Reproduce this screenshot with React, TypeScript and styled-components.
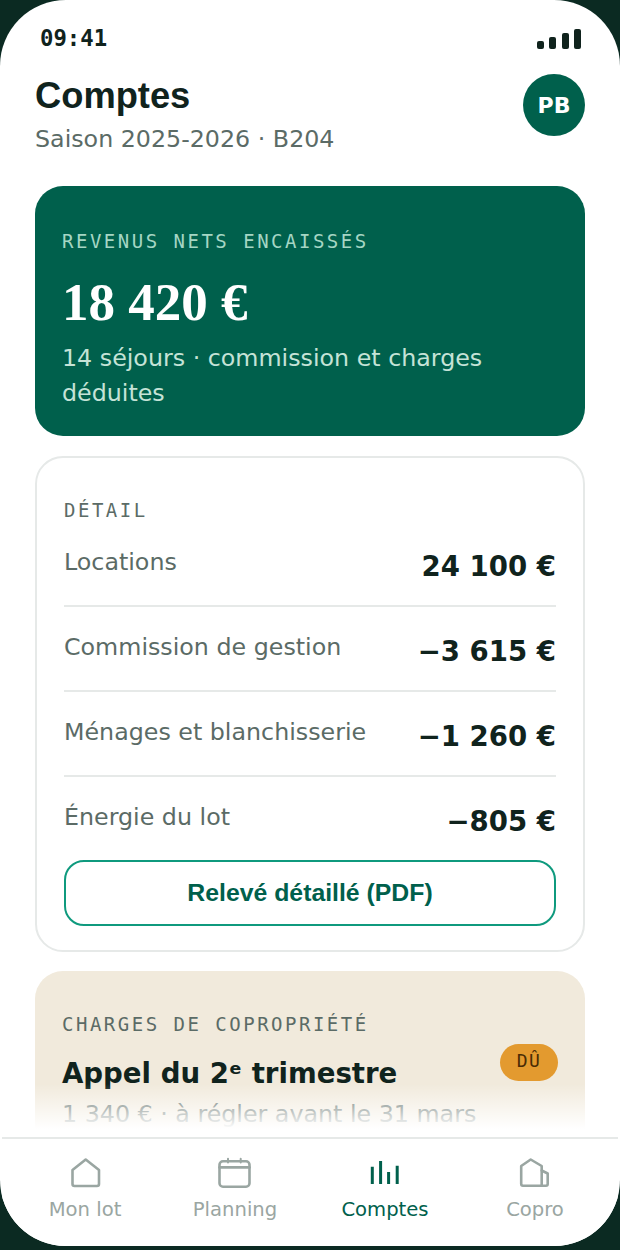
import React from 'react'
import styled, { createGlobalStyle } from 'styled-components'

const GlobalStyle = createGlobalStyle`
  html, body {
    margin: 0;
    padding: 0;
    background: #0b2a22;
  }
  * { box-sizing: border-box; }
`

const Phone = styled.div`
  position: relative;
  width: 620px;
  height: 1246px;
  border-radius: 66px;
  background: #fff;
  overflow: hidden;
  display: flex;
  flex-direction: column;
  font-family: 'DejaVu Sans', sans-serif;
`

const StatusBar = styled.div`
  display: flex;
  justify-content: space-between;
  align-items: flex-end;
  padding: 24px 39px 0 40px;
  height: 52px;
  flex: none;
`

const Clock = styled.span`
  font-family: 'DejaVu Sans Mono', monospace;
  font-weight: 700;
  font-size: 22.3px;
  line-height: 26px;
  margin-bottom: 1px;
  color: #10231d;
`

const Signal = styled.div`
  display: flex;
  align-items: flex-end;
  gap: 5.3px;
  margin-bottom: 3px;
`

const SignalBar = styled.i<{ $h: number }>`
  display: block;
  width: 7px;
  height: ${({ $h }) => $h}px;
  border-radius: 2px;
  background: #10231d;
`

const Header = styled.header`
  display: flex;
  justify-content: space-between;
  align-items: flex-start;
  padding: 23px 35px 0;
  flex: none;
`

const Title = styled.h1`
  margin: 0;
  font-family: 'Liberation Sans', sans-serif;
  font-weight: 700;
  font-size: 36.3px;
  line-height: 42px;
  color: #10231d;
`

const Subtitle = styled.p`
  margin: 7px 0 0;
  font-size: 23.75px;
  line-height: 30px;
  color: #5b6b66;
`

const Avatar = styled.div`
  width: 62px;
  height: 62px;
  border-radius: 50%;
  background: #00604c;
  color: #fff;
  font-weight: 700;
  font-size: 22px;
  display: flex;
  align-items: center;
  justify-content: center;
  margin-top: -1px;
`

const Scroll = styled.main`
  flex: 1;
  display: flex;
  flex-direction: column;
  gap: 19.5px;
  padding: 32px 35px 0;
  overflow: hidden;
`

const Hero = styled.section`
  flex: none;
  height: 250px;
  padding: 43px 27px 0;
  border-radius: 28px;
  background: #00604c;
`

const Eyebrow = styled.div<{ $color: string }>`
  font-family: 'DejaVu Sans Mono', monospace;
  font-size: 19px;
  line-height: 24px;
  letter-spacing: 2.5px;
  color: ${({ $color }) => $color};
`

const HeroAmount = styled.div`
  margin-top: 16px;
  font-family: 'Liberation Serif', serif;
  font-weight: 700;
  font-size: 53px;
  line-height: 66px;
  color: #fff;
`

const HeroNote = styled.p`
  margin: 6px 0 0;
  font-size: 23.75px;
  line-height: 34.5px;
  color: #c5e3d7;
`

const DetailCard = styled.section`
  flex: none;
  height: 496px;
  padding: 40px 27px 0;
  border: 2px solid #e6e9e8;
  border-radius: 28px;
  background: #fff;
`

const Row = styled.div`
  display: flex;
  justify-content: space-between;
  height: 85px;
  padding-top: 23px;
  border-bottom: 2px solid #e6e9e8;
  &:last-child { border-bottom: 0; height: 83px; }
`

const RowLabel = styled.span`
  font-size: 23.75px;
  line-height: 34px;
  color: #5b6b66;
`

const RowValue = styled.span`
  font-weight: 700;
  font-size: 27.6px;
  line-height: 34px;
  margin-top: 5px;
  color: #10231d;
`

const PdfButton = styled.button`
  display: block;
  width: 100%;
  height: 66px;
  border: 2px solid #0f9a7e;
  border-radius: 20px;
  background: #fff;
  font-family: 'Liberation Sans', sans-serif;
  font-weight: 700;
  font-size: 24.8px;
  color: #00604c;
`

const ChargesCard = styled.section`
  position: relative;
  flex: none;
  height: 240px;
  padding: 41px 27px 0;
  border-radius: 28px;
  background: #f1eadc;
`

const ChargesTitle = styled.h2`
  margin: 20px 0 0;
  font-size: 27.6px;
  line-height: 36px;
  font-weight: 700;
  color: #10231d;
`

const ChargesNote = styled.p`
  margin: 5px 0 0;
  font-size: 23.75px;
  line-height: 34px;
  color: #5b6b66;
`

const DueBadge = styled.span`
  position: absolute;
  top: 73px;
  right: 27px;
  width: 58px;
  height: 37px;
  border-radius: 19px;
  background: #e39a2f;
  color: #4a2c05;
  font-family: 'DejaVu Sans Mono', monospace;
  font-size: 18px;
  line-height: 33px;
  letter-spacing: 1.5px;
  text-align: center;
`

const Fade = styled.div`
  position: absolute;
  left: 0;
  right: 0;
  bottom: 109px;
  height: 53px;
  background: linear-gradient(to bottom, rgba(255, 255, 255, 0), #fff 85%);
  pointer-events: none;
`

const TabBar = styled.nav`
  position: absolute;
  left: 2px;
  right: 2px;
  bottom: 0;
  height: 109px;
  display: grid;
  grid-template-columns: repeat(4, 1fr);
  padding: 0 8px;
  background: #fff;
  border-top: 2px solid #e6e9e8;
`

const Tab = styled.div<{ $active?: boolean }>`
  display: flex;
  flex-direction: column;
  align-items: center;
  padding-top: 17px;
  color: ${({ $active }) => ($active ? '#00604c' : '#9aa6a2')};
  font-size: 19.6px;
  line-height: 26px;
  svg { display: block; margin-bottom: 7px; }
`

const iconProps = {
  width: 34,
  height: 34,
  viewBox: '0 0 34 34',
  fill: 'none',
  stroke: 'currentColor',
  strokeWidth: 2.6,
  strokeLinejoin: 'round' as const,
  strokeLinecap: 'round' as const
}

export default function App() {
  return (
    <>
      <GlobalStyle />
      <Phone>
        <StatusBar>
          <Clock>09:41</Clock>
          <Signal>
            <SignalBar $h={8} />
            <SignalBar $h={12} />
            <SignalBar $h={16} />
            <SignalBar $h={20} />
          </Signal>
        </StatusBar>
        <Header>
          <div>
            <Title>Comptes</Title>
            <Subtitle>Saison 2025-2026 · B204</Subtitle>
          </div>
          <Avatar>PB</Avatar>
        </Header>
        <Scroll>
          <Hero>
            <Eyebrow $color="#a5d6c4">REVENUS NETS ENCAISSÉS</Eyebrow>
            <HeroAmount>18 420 €</HeroAmount>
            <HeroNote>14 séjours · commission et charges déduites</HeroNote>
          </Hero>
          <DetailCard>
            <Eyebrow $color="#5b6b66">DÉTAIL</Eyebrow>
            <div>
              <Row><RowLabel>Locations</RowLabel><RowValue>24 100 €</RowValue></Row>
              <Row><RowLabel>Commission de gestion</RowLabel><RowValue>−3 615 €</RowValue></Row>
              <Row><RowLabel>Ménages et blanchisserie</RowLabel><RowValue>−1 260 €</RowValue></Row>
              <Row><RowLabel>Énergie du lot</RowLabel><RowValue>−805 €</RowValue></Row>
            </div>
            <PdfButton>Relevé détaillé (PDF)</PdfButton>
          </DetailCard>
          <ChargesCard>
            <Eyebrow $color="#5b6b66">CHARGES DE COPROPRIÉTÉ</Eyebrow>
            <ChargesTitle>Appel du 2ᵉ trimestre</ChargesTitle>
            <ChargesNote>1 340 € · à régler avant le 31 mars</ChargesNote>
            <DueBadge>DÛ</DueBadge>
          </ChargesCard>
        </Scroll>
        <Fade />
        <TabBar>
          <Tab>
            <svg {...iconProps}><path d="M4.5 14 L17.7 3.5 L31 14 V28 Q31 30 29 30 H6.5 Q4.5 30 4.5 28 Z" /></svg>
            Mon lot
          </Tab>
          <Tab>
            <svg {...iconProps}>
              <rect x="1.5" y="5.3" width="30" height="25.4" rx="3.5" />
              <path d="M1.5 11.4 H31.5" />
              <path strokeWidth="2" d="M10 2.8 V6.5 M22.7 2.8 V6.5" />
            </svg>
            Planning
          </Tab>
          <Tab $active>
            <svg {...iconProps} strokeWidth={3}>
              <path strokeLinecap="butt" d="M4.3 10.7 V28 M12.6 5 V28 M20.6 16 V28 M29.2 9.7 V28" />
            </svg>
            Comptes
          </Tab>
          <Tab>
            <svg {...iconProps}>
              <path d="M3.2 10 L12.7 3.5 L23.7 10 V29.7 H5 Q3.2 29.7 3.2 28 Z" />
              <path d="M23.7 14.5 L29.7 17.5 V28 Q29.7 29.7 28 29.7 H23.7" />
            </svg>
            Copro
          </Tab>
        </TabBar>
      </Phone>
    </>
  )
}
